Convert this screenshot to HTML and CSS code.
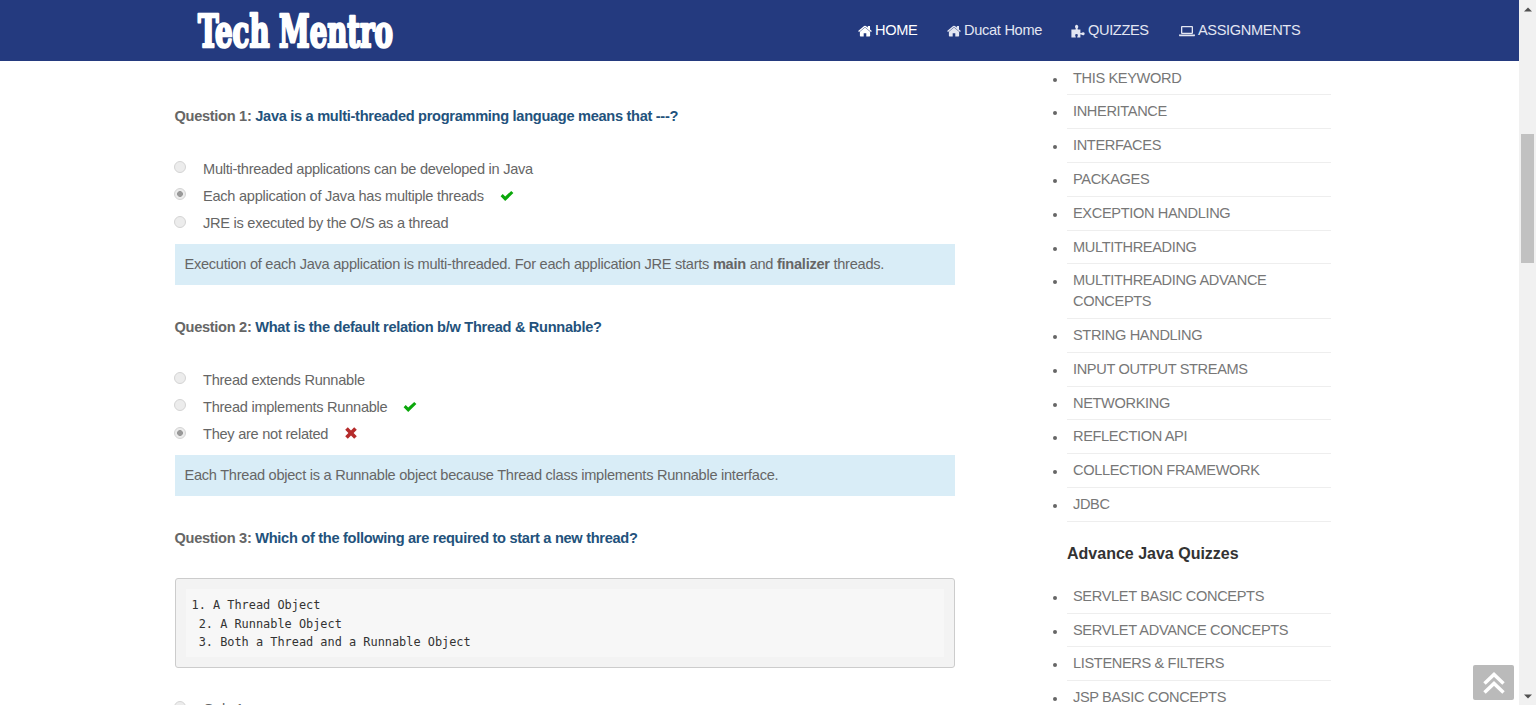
FILE: index.html
```
<!DOCTYPE html>
<html lang="en">
<head>
<meta charset="utf-8">
<title>Tech Mentro</title>
<link rel="stylesheet" href="styles.css">
</head>
<body>
<svg class="sprite" aria-hidden="true">
  <symbol id="home" viewBox="0 0 14 12"><path d="M7 2.500 1.900 6.700V10.800q0 .7.7.7H5.700V8.200h2.600v3.300h3.100q.7 0 .7-.7V6.700zM.1 6.100 6.100 1q.9-.7 1.800 0l1.900 1.600V1.100h2.200v3.400L13.900 6.100l-.9 1L7 2.100 1 7.100z"/></symbol>
  <symbol id="check" viewBox="0 0 14 12"><path d="M.6 6.200 2.700 4.100 5.200 6.600 11.200 1 13.400 3.100 5.200 11z"/></symbol>
  <symbol id="cross" viewBox="0 0 12 12"><path d="M2.800.3 6 3.500 9.200.3 11.800 2.800 8.600 6l3.200 3.200-2.600 2.600L6 8.600l-3.200 3.200L.2 9.200 3.400 6 .2 2.800z"/></symbol>
</svg>
<div class="page">
  <header class="topbar">
    <svg class="logo" viewBox="0 0 210 51" width="210" height="51"><text x="2" y="37" textLength="195" lengthAdjust="spacingAndGlyphs">Tech Mentro</text></svg>
    <nav class="nav">
      <a class="active"><svg class="i-home"><use href="#home"/></svg><span class="w-home">HOME</span></a>
      <a><svg class="i-home"><use href="#home"/></svg><span class="w-ducat">Ducat Home</span></a>
      <a><svg class="i-puzzle" viewBox="0 0 14 14"><path d="M.4 5.5h3.800q.9 0 .6-.8Q3.600 2.900 4.200 1.700 5.600-.3 7 1.700 7.700 2.900 6.500 4.700q-.3.800.6.800H9.400v3q0 .8.800.4 1.700-1.200 2.900-.4 1.100 1.200 0 2.400-1.200.8-2.900-.4-.8-.4-.8.400v2.600H6.700q-.8 0-.4-.8.900-1.500.2-2.400-1-.8-2 0-.7.900.2 2.400.400.800-.4.800H.400z"/></svg><span class="w-quiz">QUIZZES</span></a>
      <a><svg class="i-laptop" viewBox="0 0 16 12"><path fill-rule="evenodd" d="M3 1h10q1 0 1 1v6q0 1-1 1H3Q2 9 2 8V2q0-1 1-1m.3 1.200v5.600h9.400V2.200zM0 9.600h16v.8q-.3.900-1.300.9H1.300Q.3 11.300 0 10.400z"/></svg><span class="w-assign">ASSIGNMENTS</span></a>
    </nav>
  </header>
  <div class="content">
    <main class="quiz">
      <section class="question">
        <h2><b>Question 1:</b> <span>Java is a multi-threaded programming language means that ---?</span></h2>
        <ul class="options">
          <li><i class="radio"></i><span>Multi-threaded applications can be developed in Java</span></li>
          <li><i class="radio on"></i><span>Each application of Java has multiple threads</span><svg class="check"><use href="#check"/></svg></li>
          <li><i class="radio"></i><span>JRE is executed by the O/S as a thread</span></li>
        </ul>
        <p class="answer">Execution of each Java application is multi-threaded. For each application JRE starts <b>main</b> and <b>finalizer</b> threads.</p>
      </section>
      <section class="question">
        <h2><b>Question 2:</b> <span>What is the default relation b/w Thread &amp; Runnable?</span></h2>
        <ul class="options">
          <li><i class="radio"></i><span>Thread extends Runnable</span></li>
          <li><i class="radio"></i><span>Thread implements Runnable</span><svg class="check"><use href="#check"/></svg></li>
          <li><i class="radio on"></i><span>They are not related</span><svg class="cross"><use href="#cross"/></svg></li>
        </ul>
        <p class="answer">Each Thread object is a Runnable object because Thread class implements Runnable interface.</p>
      </section>
      <section class="question">
        <h2><b>Question 3:</b> <span>Which of the following are required to start a new thread?</span></h2>
        <pre class="code"><code>1. A Thread Object
 2. A Runnable Object
 3. Both a Thread and a Runnable Object</code></pre>
        <ul class="options">
          <li><i class="radio"></i><span>Only 1</span></li>
        </ul>
      </section>
    </main>
    <aside class="sidebar">
      <ul>
        <li>THIS KEYWORD</li><li>INHERITANCE</li><li>INTERFACES</li><li>PACKAGES</li><li>EXCEPTION HANDLING</li><li>MULTITHREADING</li><li>MULTITHREADING ADVANCE CONCEPTS</li><li>STRING HANDLING</li><li>INPUT OUTPUT STREAMS</li><li>NETWORKING</li><li>REFLECTION API</li><li>COLLECTION FRAMEWORK</li><li>JDBC</li>
      </ul>
      <h3>Advance Java Quizzes</h3>
      <ul>
        <li>SERVLET BASIC CONCEPTS</li><li>SERVLET ADVANCE CONCEPTS</li><li>LISTENERS &amp; FILTERS</li><li>JSP BASIC CONCEPTS</li>
      </ul>
    </aside>
  </div>
</div>
<div class="scrollbar">
  <svg viewBox="0 0 8 5"><path d="M0 4.500 4 .5l4 4z"/></svg>
  <div class="thumb"></div>
  <svg viewBox="0 0 8 5"><path d="M0 .5h8l-4 4z"/></svg>
</div>
<a class="to-top"><svg viewBox="0 0 24 24"><path d="m2.500 12.500 9.500-9 9.500 9M2.500 21.500l9.500-9 9.500 9"/></svg></a>
</body>
</html>
```
FILE: styles.css
```
* { box-sizing: border-box; }
body {
  margin: 0;
  height: 705px;
  overflow: hidden;
  display: flex;
  background: #fff;
  color: #666;
  font: 14.6px/20.8px "Liberation Sans", Arial, sans-serif;
  letter-spacing: -0.27px;
}
ul, h2, h3, p, pre { margin: 0; padding: 0; }
ul { list-style: none; }
.sprite { display: none; }
.page { flex: 1; height: 705px; overflow: hidden; }

.topbar {
  height: 61px;
  background: #243a7f;
  padding: 10px 219px 0 196px;
  display: flex;
  justify-content: space-between;
}
.logo { overflow: visible; }
.logo text {
  font: bold 45px "DejaVu Serif Condensed", "DejaVu Serif", serif;
  letter-spacing: 0;
  fill: #fff;
  stroke: #fff;
  stroke-width: 2.6px;
  stroke-linejoin: round;
}
.nav { display: flex; gap: 30px; height: 41px; letter-spacing: -0.36px; }
.nav a { display: flex; align-items: center; gap: 3px; color: #e3e6f2; white-space: nowrap; }
.nav a.active { color: #fff; }
.nav svg { fill: currentColor; }
.i-home { width: 14px; height: 12px; }
.i-puzzle { width: 14px; height: 14px; }
.i-laptop { width: 16px; height: 12px; }
.w-home { width: 42px; }
.w-ducat { width: 77px; letter-spacing: -0.3px; }
.w-quiz { width: 61px; }
.w-assign { width: 102px; }

.content { display: flex; justify-content: space-between; padding: 0 188px 0 174.500px; }
.quiz { width: 780px; padding-top: 44px; }
.question { height: 211px; }
.question h2 { font-size: 14.600px; line-height: 22px; height: 50px; color: #23527c; white-space: nowrap; letter-spacing: -0.3px; }
.question h2 b { color: #666; }
.options li { display: flex; height: 27.300px; align-items: center; }
.options span { padding-top: 1px; }
.radio {
  width: 12px;
  height: 12px;
  margin: 0 17px 3px -0.500px;
  border: 1px solid #d4d4d4;
  border-radius: 50%;
  background: #ececec;
}
.radio.on { background: radial-gradient(circle, #999 0 2.600px, #ececec 3.200px); }
.check { width: 14px; height: 12px; margin-left: 16px; fill: #0ba80b; }
.cross { width: 12px; height: 12px; margin: 0 0 2px 17px; fill: #b52b2b; }
.answer { margin-top: 7px; height: 41px; padding: 0 10px; line-height: 40px; background: #d9edf7; }
.code {
  height: 90px;
  margin: 1px 0 27px;
  padding: 10px;
  border: 1px solid #ccc;
  border-radius: 3px;
  background: #f3f3f3;
  letter-spacing: 0;
}
.code code {
  display: block;
  height: 68px;
  padding: 7px 6px 5px;
  background: #f7f7f7;
  color: #333;
  font: 11.900px/18.500px "DejaVu Sans Mono", monospace;
}

.sidebar { width: 264px; padding-top: 0.600px; }
.sidebar li {
  position: relative;
  padding: 6px;
  border-bottom: 1px solid #eee;
  color: #777;
  letter-spacing: -0.36px;
}
.sidebar li::before {
  content: "";
  position: absolute;
  left: -14px;
  top: 16px;
  width: 4px;
  height: 4px;
  border-radius: 50%;
  background: #666;
}
.sidebar h3 { height: 58px; padding-top: 21px; font-size: 16px; line-height: 22px; color: #333; letter-spacing: 0; }

.scrollbar {
  width: 17px;
  height: 705px;
  padding: 7px 2px 6px;
  background: #f1f1f1;
  display: flex;
  flex-direction: column;
  align-items: center;
}
.scrollbar svg { width: 8px; height: 5px; fill: #505050; }
.thumb { width: 13px; height: 129px; margin: 122px 0 auto; background: #c1c1c1; }
.to-top {
  position: fixed;
  right: 22px;
  bottom: 5px;
  width: 41px;
  height: 35px;
  border-radius: 2px;
  background: #bababa;
  display: grid;
  place-items: center;
}
.to-top svg { width: 24px; height: 24px; fill: none; stroke: #fff; stroke-width: 3.500px; }
```
